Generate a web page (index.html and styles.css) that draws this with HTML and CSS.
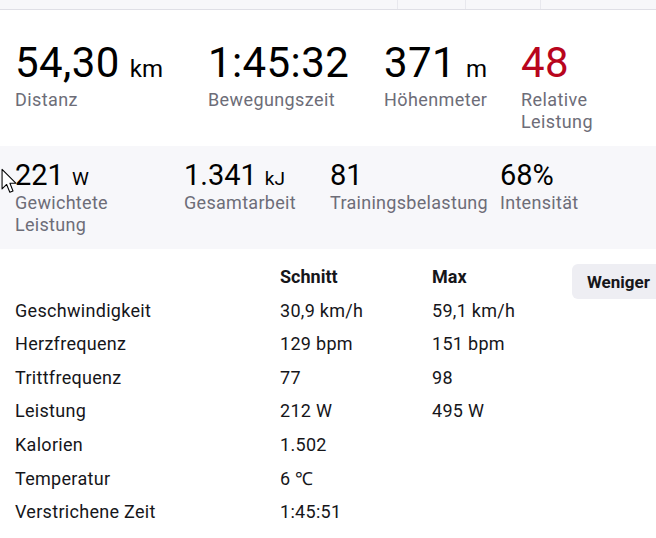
FILE: index.html
```html
<!DOCTYPE html>
<html lang="de">
<head>
<meta charset="utf-8">
<link rel="stylesheet" href="styles.css">
</head>
<body>
<div class="topbar">
  <div class="tb-cell tb-a"></div>
  <div class="tb-cell tb-b"></div>
  <div class="tb-cell tb-c"></div>
  <div class="tb-cell tb-d"></div>
</div>

<section class="primary">
  <div class="stat w1">
    <div class="val">54,30<span class="unit">km</span></div>
    <div class="lbl">Distanz</div>
  </div>
  <div class="stat w2">
    <div class="val">1:45:32</div>
    <div class="lbl">Bewegungszeit</div>
  </div>
  <div class="stat w3">
    <div class="val">371<span class="unit">m</span></div>
    <div class="lbl">Höhenmeter</div>
  </div>
  <div class="stat w4">
    <div class="val red">48</div>
    <div class="lbl">Relative<br>Leistung</div>
  </div>
</section>

<section class="secondary">
  <div class="stat s1">
    <div class="val2">221<span class="unit2">W</span></div>
    <div class="lbl">Gewichtete<br>Leistung</div>
  </div>
  <div class="stat s2">
    <div class="val2">1.341<span class="unit2">kJ</span></div>
    <div class="lbl">Gesamtarbeit</div>
  </div>
  <div class="stat s3">
    <div class="val2">81</div>
    <div class="lbl">Trainingsbelastung</div>
  </div>
  <div class="stat s4">
    <div class="val2">68%</div>
    <div class="lbl">Intensität</div>
  </div>
  <svg class="cursor" width="17" height="27" viewBox="0 0 16 25">
    <path d="M1 1 L1 19.5 L5.3 15.3 L8.3 22.6 L11.3 21.4 L8.4 14.2 L14.2 14.2 Z" fill="#fff" stroke="#000" stroke-width="1" stroke-linejoin="round"/>
  </svg>
</section>

<section class="details">
  <div class="tbl">
    <div class="row head"><span class="c1"></span><span class="c2">Schnitt</span><span class="c3">Max</span></div>
    <div class="row"><span class="c1">Geschwindigkeit</span><span class="c2">30,9 km/h</span><span class="c3">59,1 km/h</span></div>
    <div class="row"><span class="c1">Herzfrequenz</span><span class="c2">129 bpm</span><span class="c3">151 bpm</span></div>
    <div class="row"><span class="c1">Trittfrequenz</span><span class="c2">77</span><span class="c3">98</span></div>
    <div class="row"><span class="c1">Leistung</span><span class="c2">212 W</span><span class="c3">495 W</span></div>
    <div class="row"><span class="c1">Kalorien</span><span class="c2">1.502</span><span class="c3"></span></div>
    <div class="row"><span class="c1">Temperatur</span><span class="c2">6 ℃</span><span class="c3"></span></div>
    <div class="row"><span class="c1">Verstrichene Zeit</span><span class="c2">1:45:51</span><span class="c3"></span></div>
  </div>
  <button class="btn">Weniger</button>
</section>
</body>
</html>
```

FILE: styles.css
```css
html, body {
  margin: 0;
  padding: 0;
  background: #fff;
  font-family: Roboto, "Liberation Sans", sans-serif;
  color: #16161a;
  overflow: hidden;
}

.topbar {
  display: flex;
  height: 9px;
  background: #f7f7fa;
  border-bottom: 1px solid #dfdfe6;
}
.tb-cell { height: 100%; }
.tb-a { width: 397px; border-right: 1px solid #e8e8ee; }
.tb-b { width: 67px; border-right: 1px solid #e8e8ee; }
.tb-c { width: 74px; border-right: 1px solid #e8e8ee; }
.tb-d { flex: 1; }

.primary {
  display: flex;
  padding: 29px 0 13px 15px;
}
.w1 { width: 193px; }
.w2 { width: 176px; }
.w3 { width: 137px; }
.w4 { width: 120px; }

.val {
  font-size: 42px;
  line-height: 48px;
  color: #000;
  letter-spacing: 0.4px;
  white-space: nowrap;
}
.val.red { color: #b8051d; }
.unit {
  font-size: 24px;
  line-height: 1;
  margin-left: 10px;
  letter-spacing: 0.2px;
}

.lbl {
  font-size: 18px;
  line-height: 22px;
  color: #6d6d78;
  letter-spacing: 0.4px;
  margin-top: 2px;
}

.secondary {
  position: relative;
  display: flex;
  background: #f7f7fa;
  padding: 12px 0 13px 15px;
}
.s1 { width: 169px; }
.s2 { width: 146px; }
.s3 { width: 170px; }
.s4 { width: 140px; }

.val2 {
  font-size: 29px;
  line-height: 34px;
  color: #000;
  white-space: nowrap;
}
.unit2 {
  font-size: 19px;
  line-height: 1;
  margin-left: 8px;
}
.secondary .lbl { margin-top: 0; letter-spacing: 0.3px; }

.cursor {
  position: absolute;
  left: 1px;
  top: 22px;
}

.details {
  display: flex;
  align-items: flex-start;
  padding: 11px 0 0 15px;
}
.tbl {
  display: flex;
  flex-direction: column;
  width: 557px;
}
.row {
  display: flex;
  line-height: 33.6px;
  font-size: 18px;
  letter-spacing: 0.3px;
  color: #16161a;
}
.row span { white-space: nowrap; }
.row.head {
  font-weight: 700;
  letter-spacing: 0;
}
.c1 { width: 265px; }
.c2 { width: 152px; }
.c3 { width: 140px; }

.btn {
  margin-top: 4px;
  height: 35px;
  padding: 0 14px 0 15px;
  border: none;
  border-radius: 6px;
  background: #eeeef3;
  font-family: Roboto, "Liberation Sans", sans-serif;
  font-size: 17px;
  font-weight: 700;
  color: #16161a;
  white-space: nowrap;
}
```
